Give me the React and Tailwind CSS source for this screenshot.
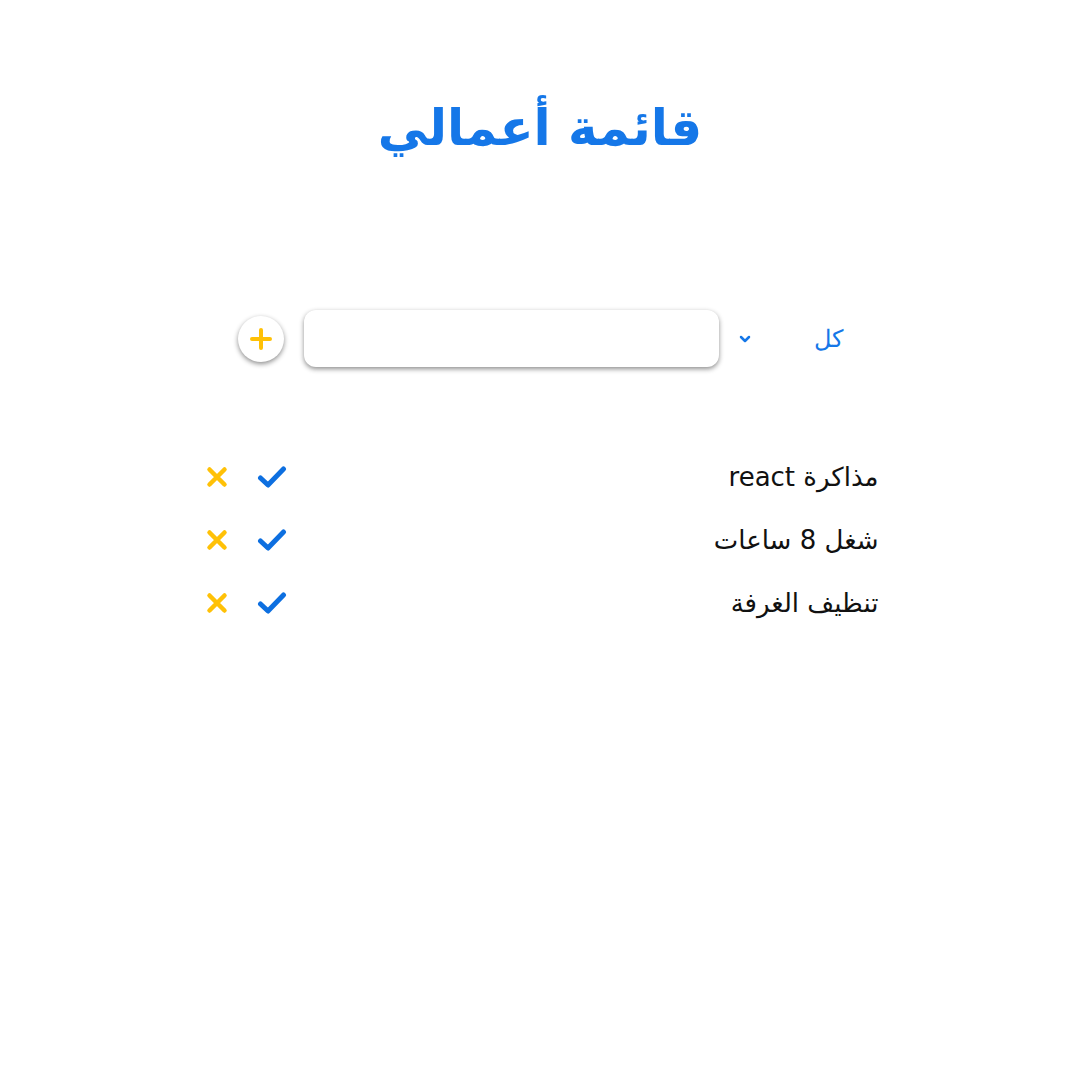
import React from 'react'

const tasks = ['مذاكرة react', 'شغل 8 ساعات', 'تنظيف الغرفة']

function CheckIcon() {
  return (
    <svg className="shrink-0 w-[30px] h-[24px] text-[#0d6fe0]" viewBox="0 0 30 24" fill="none" stroke="currentColor" strokeWidth={5} strokeLinecap="round" strokeLinejoin="round">
      <path d="M3.5 13l7.5 7L26.5 4" />
    </svg>
  )
}

function XIcon() {
  return (
    <svg className="shrink-0 w-[22px] h-[22px] text-[#ffc107]" viewBox="0 0 22 22" fill="none" stroke="currentColor" strokeWidth={4.5} strokeLinecap="round">
      <path d="M3.5 3.5l15 15M18.5 3.5l-15 15" />
    </svg>
  )
}

function App() {
  return (
    <div dir="rtl" className="min-h-screen bg-white font-['DejaVu_Sans',sans-serif]">
      <h1 className="pt-[92px] text-center text-[50px] leading-[72px] font-bold text-[#1577e8]">قائمة أعمالي</h1>

      <div className="mt-[146px] flex items-center justify-center">
        <div className="shrink-0 flex items-center justify-between w-[124px] pl-[18px] text-[#1577e8]">
          <span className="text-[24px] font-light">كل</span>
          <svg className="shrink-0 w-[16px] h-[16px]" viewBox="0 0 16 16" fill="none" stroke="currentColor" strokeWidth={2.5} strokeLinecap="round" strokeLinejoin="round">
            <path d="M4 6l4 4 4-4" />
          </svg>
        </div>
        <input className="shrink-0 w-[415px] h-[57px] rounded-xl bg-white shadow-[0_2px_5px_rgba(0,0,0,0.45)] outline-none px-4" />
        <button className="shrink-0 mr-[20px] w-[46px] h-[46px] rounded-full bg-white shadow-[0_2px_5px_rgba(0,0,0,0.45)] flex items-center justify-center">
          <svg className="w-[22px] h-[22px] text-[#ffc107]" viewBox="0 0 22 22" fill="none" stroke="currentColor" strokeWidth={4} strokeLinecap="round">
            <path d="M11 2v18M2 11h18" />
          </svg>
        </button>
      </div>

      <ul className="mt-[92px] mx-auto w-[673px] translate-x-[2px] flex flex-col gap-[27px]">
        {tasks.map((t) => (
          <li key={t} className="flex items-center justify-between h-[36px]">
            <span className="text-[26px] text-[#111]">{t}</span>
            <div className="flex items-center gap-[29px]">
              <CheckIcon />
              <XIcon />
            </div>
          </li>
        ))}
      </ul>
    </div>
  )
}

export default App
